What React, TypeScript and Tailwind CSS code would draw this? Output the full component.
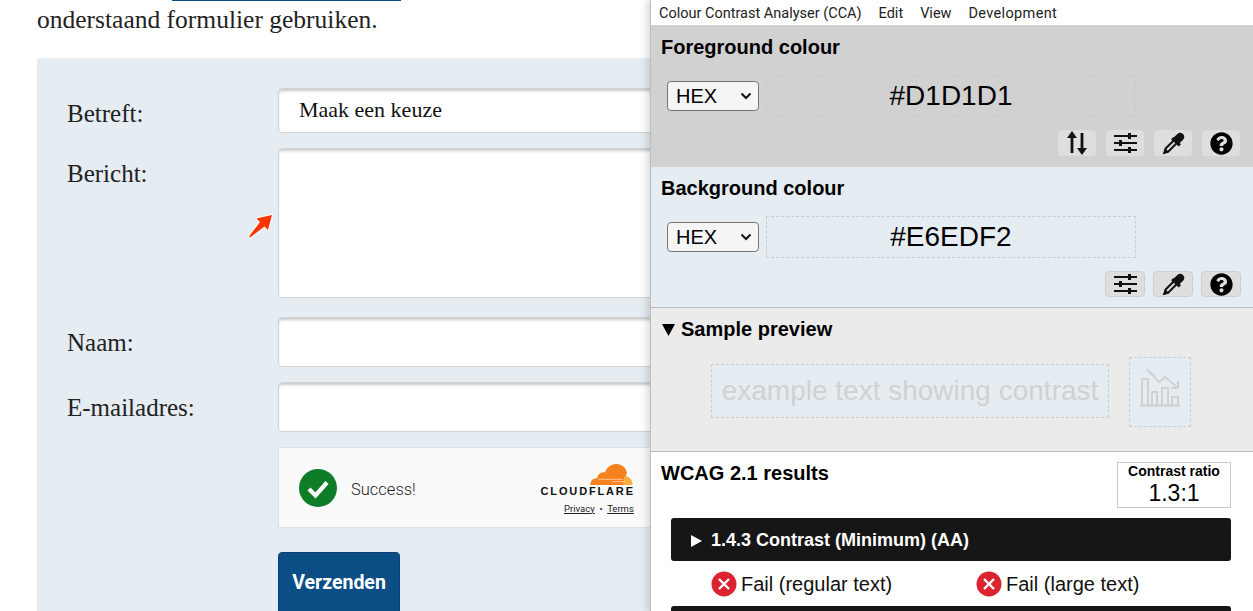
import React from "react";
import { FaQuestionCircle } from "react-icons/fa";

const Sliders = () => (
  <svg width="23" height="22" viewBox="0 0 23 22" fill="none" stroke="#111" strokeWidth="2">
    <path d="M0 4h23M0 11h23M0 18h23" />
    <path d="M15.5 1v6M6.5 8v6M15.5 15v6" strokeWidth="3" />
  </svg>
);
const Swap = () => (
  <svg width="22" height="24" viewBox="0 0 22 24" fill="#111">
    <path d="M6 0l5 7H7.4v15H4.6V7H1zM16 24l-5-7h3.6V2h2.8v15H21z" />
  </svg>
);
const Dropper = () => (
  <svg width="23" height="23" viewBox="0 0 24 24">
    <path d="M12.5 5.5l3.5-3.5a4.6 4.6 0 0 1 6 0 4.6 4.6 0 0 1 0 6l-3.5 3.5 1.3 1.3-2.3 2.3L9.5 7.5l2-2z" fill="#111" />
    <path d="M12.5 8.5L4 17l-1.5 4.5L7 20l8.5-8.5" fill="none" stroke="#111" strokeWidth="2.2" />
    <path d="M1.5 23l1.5-6 4.5 4.5z" fill="#111" />
  </svg>
);
const Chart = () => (
  <svg width="40" height="41" viewBox="0 0 40 41" fill="none" stroke="#d1d1d1" strokeWidth="2">
    <path d="M0 39.5h40" strokeWidth="2.6" />
    <path d="M2 39V13h6v26M12 39V26h5v13M22 39V22h6v17M32 39V31h6v8" />
    <path d="M7 3l12 13 6-5 12 10" />
    <path d="M38 15v7h-7" />
  </svg>
);
const Fail = () => (
  <svg width="26" height="26" viewBox="0 0 26 26" className="shrink-0">
    <circle cx="13" cy="13" r="12.5" fill="#dc2330" />
    <path d="M8 8l10 10M18 8L8 18" stroke="#fff" strokeWidth="2.4" />
  </svg>
);
const Cloud = () => (
  <svg width="45" height="24" viewBox="0 0 44 25">
    <path d="M0 24c0-4 2-7 7-7 1-5 5-7 8-6 2-5 6-9 12-9 6 0 10 4 11 9 0 2-1 3-1 4l-1 9z" fill="#f6821f" />
    <path d="M34 24c1-3 1-6 1-9 5-1 9 3 9 9z" fill="#fbad41" />
    <path d="M8 18h26M22 20.5h14" stroke="#fff" strokeWidth="0.8" opacity="0.7" />
  </svg>
);

const Field = ({ label, h, mb, children }: { label: string; h: string; mb: string; children?: React.ReactNode }) => (
  <div className={`flex ${h} ${mb}`}>
    <div className="w-[241px] shrink-0 pl-[30px] pt-[12px] text-[25px] leading-[28px] text-[#222]">{label}</div>
    <div className="flex-1 rounded-[4px] border border-[#cfd3d6] bg-white shadow-[inset_0_3px_3px_-1px_#c9c9c9]">{children}</div>
  </div>
);

const Tool = ({ dark, children }: { dark?: boolean; children: React.ReactNode }) => (
  <div className={`flex h-[26px] items-center justify-center rounded-[4px] ${dark ? "w-[40px] border border-[#cfcfcf] bg-[#dedede]" : "w-[38px] bg-[#dedede]"}`}>
    {children}
  </div>
);

const HexSelect = () => (
  <div className="flex h-[30px] w-[92px] items-center justify-between rounded-[4px] border border-[#767676] bg-[#f5f5f5] pl-[8px] pr-[6px] text-[20px] leading-none text-black">
    HEX
    <svg width="12" height="8" viewBox="0 0 12 8" fill="none" stroke="#111" strokeWidth="2">
      <path d="M1.5 1.5L6 6l4.5-4.5" />
    </svg>
  </div>
);

const ColourSection = ({ title, value, bg, dashed, rowMt, tools, children }: { title: string; value: string; bg: string; dashed: string; rowMt: string; tools: string; children: React.ReactNode }) => (
  <section className={bg}>
    <h2 className="pl-[10px] text-[20px] font-bold leading-[23px] text-black">{title}</h2>
    <div className={`${rowMt} flex items-center pl-[16px]`}>
      <HexSelect />
      <div className={`ml-[7px] flex h-[42px] w-[370px] items-center justify-center border border-dashed ${dashed} text-[28px] text-black`}>{value}</div>
    </div>
    <div className={`mt-[13px] flex justify-end ${tools}`}>{children}</div>
  </section>
);

export default function App() {
  return (
    <div className="relative h-[611px] w-[1253px] overflow-hidden bg-white font-['Liberation_Serif',serif]">
      <main className="pl-[37px]">
        <div className="ml-[135px] h-px w-[229px] bg-[#0b4d85]" />
        <p className="mt-[5px] text-[25.5px] leading-[28px] text-[#222]">onderstaand formulier gebruiken.</p>
        <div className="mt-[24px] rounded-[4px] bg-[#e5ecf2] pt-[30px]">
          <Field label="Betreft:" h="h-[45px]" mb="mb-[15px]">
            <div className="pl-[20px] pt-[6px] text-[22px] leading-[30px] text-[#111]">Maak een keuze</div>
          </Field>
          <Field label="Bericht:" h="h-[150px]" mb="mb-[19px]" />
          <Field label="Naam:" h="h-[50px]" mb="mb-[15px]" />
          <Field label="E-mailadres:" h="h-[50px]" mb="mb-[15px]" />
          <div className="ml-[241px] flex h-[81px] items-center border border-[#e0e0e0] bg-[#fafafa] pl-[20px]">
            <svg width="38" height="38" viewBox="0 0 38 38">
              <circle cx="19" cy="19" r="19" fill="#0f7d27" />
              <path d="M10 20l6.5 6.5L28 13.5" fill="none" stroke="#fff" strokeWidth="4.2" />
            </svg>
            <span className="ml-[14px] pt-[5px] font-['Roboto',sans-serif] text-[16.5px] font-light text-[#222]">Success!</span>
            <div className="ml-[125px] flex w-[93px] flex-col items-end">
              <Cloud />
              <span className="-mt-[1px] -mr-[1px] font-['Liberation_Sans',sans-serif] text-[11px] font-bold leading-[12px] tracking-[1.85px] text-[#111]">CLOUDFLARE</span>
              <span className="mt-[6px] font-['Roboto',sans-serif] text-[9.5px] leading-[11px] text-[#222]">
                <span className="underline">Privacy</span> &nbsp;•&nbsp; <span className="underline">Terms</span>
              </span>
            </div>
          </div>
          <div className="ml-[241px] mt-[24px] flex h-[70px] w-[122px] items-start justify-center rounded-[4px] border border-[#0a3f7a] bg-[#0b4d85] pt-[19px] font-['Roboto',sans-serif] text-[19.5px] font-bold leading-[22px] text-white">
            Verzenden
          </div>
        </div>
      </main>

      <svg width="30" height="30" viewBox="0 0 30 30" className="absolute left-[246px] top-[212px]">
        <path d="M26 3L10.5 6.5l3.5 3.5L3 24.5l1 1L18.5 14.5l3.5 3.5z" fill="#fff" stroke="#fff" strokeWidth="2" strokeLinejoin="round" />
        <path d="M26 3L10.5 6.5l3.5 3.5L3 24.5l1 1L18.5 14.5l3.5 3.5z" fill="#ff3300" />
      </svg>

      <aside className="absolute inset-y-0 right-0 w-[603px] border-l border-[#bdbdbd] bg-white font-['Liberation_Sans',sans-serif] shadow-[-4px_0_6px_rgba(0,0,0,0.12)]">
        <nav className="flex h-[25px] items-center gap-[17px] bg-white pl-[8px] pt-[2px] font-['Roboto',sans-serif] text-[14.5px] text-[#222]">
          <span>Colour Contrast Analyser (CCA)</span>
          <span>Edit</span>
          <span>View</span>
          <span className="tracking-[0.35px]">Development</span>
        </nav>
        <ColourSection title="Foreground colour" value="#D1D1D1" bg="bg-[#d1d1d1] h-[142px] pt-[11px]" dashed="border-[#c9c9c9]" rowMt="mt-[16px]" tools="gap-[10px] pr-[13px]">
          <Tool><Swap /></Tool>
          <Tool><Sliders /></Tool>
          <Tool><Dropper /></Tool>
          <Tool><FaQuestionCircle size={23} color="#000" /></Tool>
        </ColourSection>
        <ColourSection title="Background colour" value="#E6EDF2" bg="bg-[#e5ecf2] h-[140px] pt-[10px]" dashed="border-[#cdcdcd]" rowMt="mt-[16px]" tools="gap-[8px] pr-[12px]">
          <Tool dark><Sliders /></Tool>
          <Tool dark><Dropper /></Tool>
          <Tool dark><FaQuestionCircle size={23} color="#000" /></Tool>
        </ColourSection>
        <section className="h-[145px] border-y border-[#bdbdbd] bg-[#ebebeb] pt-[10px]">
          <h2 className="flex items-center pl-[11px] text-[20px] font-bold leading-[23px] text-black">
            <svg width="13" height="13" viewBox="0 0 13 13" className="mr-[6px]"><path d="M0 1h13L6.5 13z" fill="#000" /></svg>
            Sample preview
          </h2>
          <div className="ml-[60px] mt-[16px] flex items-start">
            <div className="mt-[7px] flex h-[54px] w-[398px] items-center justify-center border border-dashed border-[#cdcdcd] bg-[#e5ecf2] text-[28px] text-[#d1d1d1]">
              example text showing contrast
            </div>
            <div className="ml-[20px] flex h-[70px] w-[62px] items-start justify-center border border-dashed border-[#cdcdcd] bg-[#e5ecf2] pt-[8px]">
              <Chart />
            </div>
          </div>
        </section>
        <section>
          <div className="flex items-start justify-between pl-[10px] pr-[22px] pt-[10px]">
            <h2 className="text-[20px] font-bold leading-[23px] text-black">WCAG 2.1 results</h2>
            <div className="flex h-[46px] w-[114px] flex-col items-center border border-[#c8c8c8] text-black">
              <span className="text-[14px] font-bold leading-[16px]">Contrast ratio</span>
              <span className="text-[23px] leading-[28px]">1.3:1</span>
            </div>
          </div>
          <div className="ml-[20px] mr-[22px] mt-[10px] flex h-[43px] items-center rounded-[3px] bg-[#161616] pl-[20px] pt-[2px] text-[18px] font-bold text-white">
            <svg width="11" height="12" viewBox="0 0 11 12" className="mr-[9px]"><path d="M0 0l11 6-11 6z" fill="#fff" /></svg>
            1.4.3 Contrast (Minimum) (AA)
          </div>
          <div className="ml-[60px] mt-[10px] flex h-[26px] items-center text-[20px] text-[#111]">
            <span className="flex w-[265px] items-center gap-[4px]"><Fail />Fail (regular text)</span>
            <span className="flex items-center gap-[4px]"><Fail />Fail (large text)</span>
          </div>
          <div className="ml-[20px] mr-[22px] mt-[9px] h-[20px] rounded-t-[3px] bg-[#161616]" />
        </section>
      </aside>
    </div>
  );
}
